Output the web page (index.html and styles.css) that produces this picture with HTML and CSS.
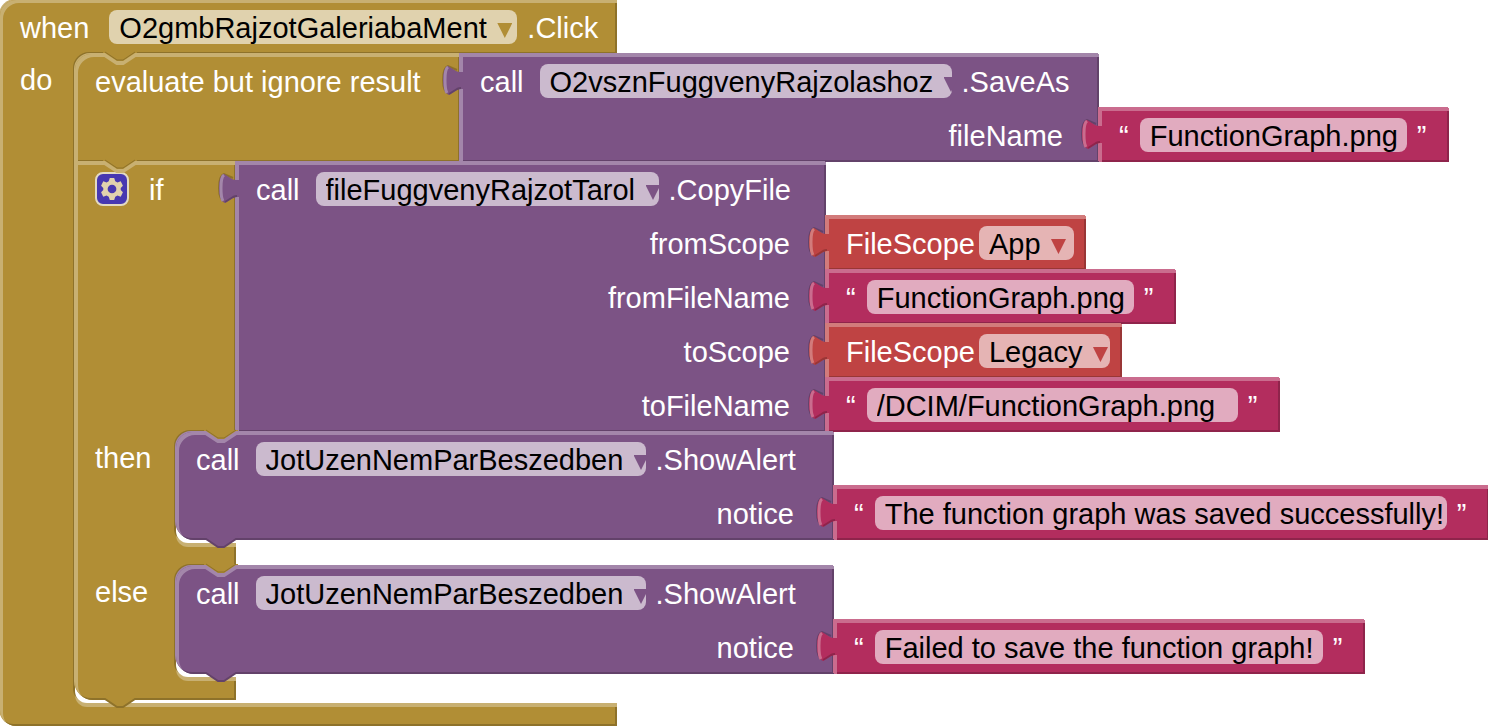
FILE: index.html
```html
<!DOCTYPE html>
<html lang="en" dir="ltr">

<head>
  <meta charset="utf-8">
  <meta name="viewport" content="width=device-width, initial-scale=1.0">
  <title>Blocks</title>

  <link rel="stylesheet" href="styles.css">
</head>

<body>

  <!-- shared puzzle shapes, coloured by the block that uses them -->
  <svg class="shapes" width="0" height="0" aria-hidden="true">
    <symbol id="tab" viewBox="-20 0 24 54">
      <path class="edge" d="M-3 16 L-12 12 Q-17 14 -17 26 Q-17 38 -11 40" />
      <path class="main" d="M4 18 H0 Q-2 18 -4 17 L-12 12 Q-17 13 -17 26 Q-17 39 -11 41 L-3 36 Q-1 35 0 35 H4 Z" />
      <path class="light" d="M-12 13 Q-15 15 -15 26 Q-15 36 -13 39" />
      <path class="dark" d="M-11 40 L-3 35 Q-1 34 1 34" />
    </symbol>
    <symbol id="notch" viewBox="0 -4 34 18">
      <path class="light" d="M0 1 H2 L14 9 H20 L32 1 H34" />
      <path class="cut" d="M0 -1 H2 L14 7 H20 L32 -1 H34 V-2 H0 Z" />
      <path class="line" d="M2 -2 L14 6 H20 L32 -2" />
    </symbol>
    <symbol id="bump" viewBox="0 -4 34 14">
      <path class="main" d="M0 -4 L2 -1 L14 7 H20 L32 -1 L34 -4 Z" />
      <path class="dark" d="M1 -1 H2 L14 7 H20 L32 -1 H34" />
    </symbol>
  </svg>

  <main class="block control event">
    <div class="row">
      <span class="when">when</span>
      <span class="field field-button"><select aria-label="Button"><option>O2gmbRajzotGaleriabaMent</option></select></span>
      <span>.Click</span>
    </div>

    <div class="branch">
      <span class="branch-name">do</span>
      <div class="mouth">

        <div class="block control statement first evaluate">
          <svg class="notch"><use href="#notch" /></svg>
          <div class="input">
            <div class="row input-name"><span>evaluate but ignore result</span></div>
            <div class="block method value save">
              <svg class="tab"><use href="#tab" /></svg>
              <div class="row">
                <span class="call">call</span>
                <span class="field field-file"><select aria-label="File component"><option>O2vsznFuggvenyRajzolashoz</option></select></span>
                <span>.SaveAs</span>
              </div>
              <div class="input">
                <div class="row input-name arg"><span>fileName</span></div>
                <div class="block text value">
                  <svg class="tab"><use href="#tab" /></svg>
                  <div class="row">
                    <span>“</span>
                    <span class="field field-name"><input type="text" aria-label="fileName" value="FunctionGraph.png"></span>
                    <span>”</span>
                  </div>
                </div>
              </div>
            </div>
          </div>
        </div>

        <div class="block control statement last if">
          <svg class="notch"><use href="#notch" /></svg>
          <div class="input">
            <div class="row input-name">
              <button type="button" class="gear" aria-label="Settings">
                <svg viewBox="1 1 22 22">
                  <path fill-rule="evenodd" d="M10 2h4l1 3 2 1 3-1 2 4-2 2v2l2 2-2 4-3-1-2 1-1 3h-4l-1-3-2-1-3 1-2-4 2-2v-2L2 9l2-4 3 1 2-1zM12 8a4 4 0 1 0 0 8a4 4 0 1 0 0-8z" />
                </svg>
              </button>
              <span class="if-name">if</span>
            </div>
            <div class="block method value copy">
              <svg class="tab"><use href="#tab" /></svg>
              <div class="row">
                <span class="call">call</span>
                <span class="field field-store"><select aria-label="File component"><option>fileFuggvenyRajzotTarol</option></select></span>
                <span>.CopyFile</span>
              </div>
              <div class="input">
                <div class="row input-name arg"><span>fromScope</span></div>
                <div class="block scope value">
                  <svg class="tab"><use href="#tab" /></svg>
                  <div class="row">
                    <span>FileScope</span>
                    <span class="field field-app"><select aria-label="fromScope"><option>App</option></select></span>
                  </div>
                </div>
              </div>
              <div class="input">
                <div class="row input-name arg"><span>fromFileName</span></div>
                <div class="block text value">
                  <svg class="tab"><use href="#tab" /></svg>
                  <div class="row">
                    <span>“</span>
                    <span class="field field-name"><input type="text" aria-label="fromFileName" value="FunctionGraph.png"></span>
                    <span>”</span>
                  </div>
                </div>
              </div>
              <div class="input">
                <div class="row input-name arg"><span>toScope</span></div>
                <div class="block scope value">
                  <svg class="tab"><use href="#tab" /></svg>
                  <div class="row">
                    <span>FileScope</span>
                    <span class="field field-legacy"><select aria-label="toScope"><option>Legacy</option></select></span>
                  </div>
                </div>
              </div>
              <div class="input">
                <div class="row input-name arg"><span>toFileName</span></div>
                <div class="block text value">
                  <svg class="tab"><use href="#tab" /></svg>
                  <div class="row">
                    <span>“</span>
                    <span class="field field-path"><input type="text" aria-label="toFileName" value="/DCIM/FunctionGraph.png"></span>
                    <span>”</span>
                  </div>
                </div>
              </div>
            </div>
          </div>

          <div class="branch">
            <span class="branch-name">then</span>
            <div class="mouth">
              <div class="block method statement first last alert">
                <svg class="notch"><use href="#notch" /></svg>
                <div class="row">
                  <span class="call">call</span>
                  <span class="field field-notifier"><select aria-label="Notifier"><option>JotUzenNemParBeszedben</option></select></span>
                  <span>.ShowAlert</span>
                </div>
                <div class="input">
                  <div class="row input-name arg"><span>notice</span></div>
                  <div class="block text value">
                    <svg class="tab"><use href="#tab" /></svg>
                    <div class="row">
                      <span>“</span>
                      <span class="field field-success"><input type="text" aria-label="notice" value="The function graph was saved successfully!"></span>
                      <span>”</span>
                    </div>
                  </div>
                </div>
                <svg class="bump"><use href="#bump" /></svg>
              </div>
            </div>
          </div>

          <div class="branch">
            <span class="branch-name">else</span>
            <div class="mouth">
              <div class="block method statement first last alert">
                <svg class="notch"><use href="#notch" /></svg>
                <div class="row">
                  <span class="call">call</span>
                  <span class="field field-notifier"><select aria-label="Notifier"><option>JotUzenNemParBeszedben</option></select></span>
                  <span>.ShowAlert</span>
                </div>
                <div class="input">
                  <div class="row input-name arg"><span>notice</span></div>
                  <div class="block text value">
                    <svg class="tab"><use href="#tab" /></svg>
                    <div class="row">
                      <span>“</span>
                      <span class="field field-failed"><input type="text" aria-label="notice" value="Failed to save the function graph!"></span>
                      <span>”</span>
                    </div>
                  </div>
                </div>
                <svg class="bump"><use href="#bump" /></svg>
              </div>
            </div>
          </div>
          <svg class="bump"><use href="#bump" /></svg>
        </div>

      </div>
    </div>
  </main>

</body>

</html>
```

FILE: styles.css
```css
* {
  box-sizing: border-box;
}

body {
  margin: 0;
  background: #fff;
  color: #fff;
  font-family: "Liberation Sans", Arial, sans-serif;
  font-size: 29px;
  line-height: 36px;
}

.shapes {
  position: absolute;
}

/* block colours */
.control {
  --main: #b18e35;
  --light: #c8b072;
  --dark: #8e722a;
  --field: #e0d2ae;
}

.method {
  --main: #7c5385;
  --light: #a386aa;
  --dark: #63426a;
  --field: #cbbace;
}

.text {
  --main: #b32d5e;
  --light: #ca6c8e;
  --dark: #8f244b;
  --field: #e1abbf;
}

.scope {
  --main: #bf4343;
  --light: #d27b7b;
  --dark: #993636;
  --field: #e5b4b4;
}

/* blocks */
.block {
  position: relative;
  flex: none;
  background: var(--main);
  box-shadow: -1px -1px 0 var(--light), inset 3px 3px 0 var(--light), inset -2px -2px 0 var(--dark);
}

.event {
  width: 617px;
  padding-bottom: 23px;
  border-radius: 16px 0 0 16px;
}

.evaluate {
  width: 385px;
}

.if {
  width: 161px;
}

.save {
  width: 639px;
}

.copy {
  width: 590px;
}

.alert {
  width: 658px;
}

.first {
  border-top-left-radius: 16px;
}

.last {
  border-bottom-left-radius: 18px;
}

/* rows */
.row {
  display: flex;
  gap: 10px;
  height: 54px;
  padding: 10px 20px;
  white-space: nowrap;
}

.text > .row {
  padding-right: 23px;
}

.scope > .row {
  gap: 4px;
  padding-right: 12px;
}

.when {
  margin-right: 10px;
}

.call {
  margin-right: 6px;
}

.input {
  display: flex;
}

.input-name {
  flex: 0 0 100%;
}

.arg {
  justify-content: flex-end;
  padding-right: 36px;
}

.alert .arg {
  padding-right: 40px;
}

/* statement branches */
.branch {
  display: flex;
}

.branch + .branch {
  margin-top: 23px;
}

.if {
  padding-bottom: 23px;
}

.event > .branch > .branch-name {
  flex: 0 0 75px;
}

.branch-name {
  flex: 0 0 101px;
  padding: 8px 0 0 20px;
}

.mouth {
  flex: 1;
  min-width: 0;
  padding-bottom: 3px;
  background: #fff;
  border-radius: 16px 0 0 12px;
  box-shadow: -2px -2px 0 var(--dark), 0 4px 0 var(--light);
}

/* fields */
.field {
  display: flex;
  flex: none;
  height: 34px;
  padding-left: 10px;
  background: var(--field);
  border-radius: 8px;
}

.field select,
.field input {
  height: 36px;
  margin: 0;
  padding: 0;
  border: 0;
  outline: 0;
  background: none;
  color: #000;
  font: inherit;
  appearance: none;
}

.field select {
  flex: none;
}

.field input {
  flex: 1;
  min-width: 0;
  margin-right: -10px;
}

.field:has(select)::after {
  content: "";
  flex: none;
  width: 15px;
  height: 15px;
  margin: 13px 0 0 10px;
  background: var(--main);
  clip-path: polygon(0 0, 100% 0, 50% 100%);
}

.field-button {
  width: 408px;
}

.field-file {
  width: 412px;
}

.field-store {
  width: 343px;
}

.field-notifier {
  width: 390px;
}

.field-app {
  width: 95px;
}

.field-legacy {
  width: 131px;
}

.field-name {
  width: 267px;
}

.field-path {
  width: 371px;
}

.field-success {
  width: 572px;
}

.field-failed {
  width: 448px;
}

.text .field {
  margin-left: 1px;
}

.gear {
  width: 34px;
  height: 34px;
  padding: 3px;
  border: 2px solid #e3dac3;
  border-radius: 8px;
  background: #4738b1;
}

.gear svg {
  display: block;
  width: 24px;
  height: 24px;
  fill: #e0d2ae;
}

.if-name {
  margin-left: 10px;
}

/* puzzle shapes */
.tab,
.notch,
.bump {
  position: absolute;
  overflow: visible;
}

.tab {
  top: 0;
  left: -20px;
  width: 24px;
  height: 54px;
}

.notch {
  top: -4px;
  left: 28px;
  width: 34px;
  height: 18px;
}

.bump {
  bottom: -10px;
  left: 28px;
  width: 34px;
  height: 14px;
}

.main {
  fill: var(--main);
}

.cut {
  fill: #b18e35;
}

.light,
.dark,
.line,
.edge {
  fill: none;
  stroke: var(--light);
  stroke-width: 3px;
}

#notch .light {
  stroke-width: 4px;
}

.dark {
  stroke: var(--dark);
  stroke-width: 2px;
}

.line {
  stroke: #8e722a;
  stroke-width: 1px;
}

.edge {
  stroke: #00000033;
  stroke-width: 2px;
}
```
